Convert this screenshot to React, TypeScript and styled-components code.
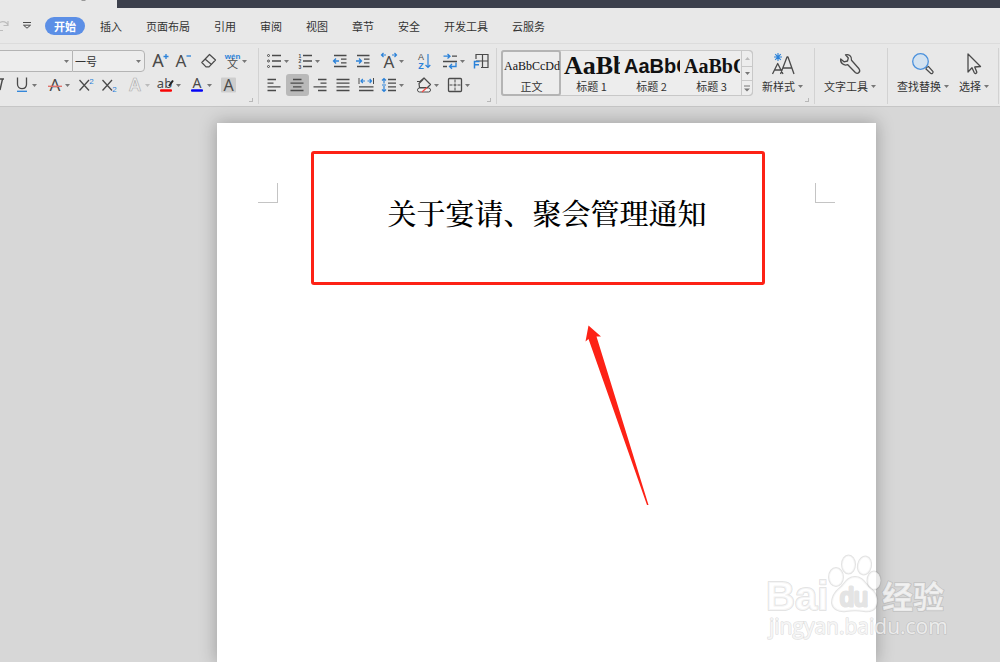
import React from "react";
import styled, { createGlobalStyle, css } from "styled-components";

const ink = "#4a4a4a";
const blue = "#2b82d9";
const uiFont = '"Noto Sans", "Noto Sans CJK SC", sans-serif';
const smallFont = '"Liberation Sans", "Noto Sans CJK SC", sans-serif';

const GlobalStyle = createGlobalStyle`
  *, *::before, *::after { box-sizing: border-box; }
  body {
    margin: 0;
    font: 11px/16px "Noto Sans CJK SC", "Noto Sans", sans-serif;
    color: #333;
    background: #d7d7d7;
    overflow: hidden;
  }
  button, select { font: inherit; color: inherit; background: none; border: 0; padding: 0; margin: 0; }
`;

const Shell = styled.div`
  display: flex;
  flex-direction: column;
  min-height: 100vh;
`;

const TitleBar = styled.div`
  display: flex;
  height: 8px;
  background: #3c404c;
`;

const WindowTab = styled.div`
  width: 117px;
  padding-left: 80px;
  background: #e8e8e8;

  svg { display: block; }
`;

const MenuBar = styled.nav`
  display: flex;
  align-items: center;
  height: 35px;
  background: #e8e8e8;
`;

const QuickTool = styled.button<{ $w: number }>`
  display: flex;
  align-items: center;
  width: ${(p) => p.$w}px;
  height: 18px;
`;

const MenuItem = styled.button<{ $active?: boolean }>`
  height: 18px;
  margin-right: 24px;
  white-space: nowrap;
  ${(p) =>
    p.$active &&
    css`
      padding: 0 9px;
      margin-right: 15px;
      border-radius: 9px;
      background: #5c8fe6;
      color: #fff;
      font-weight: 700;
    `}
`;

const Ribbon = styled.div`
  display: flex;
  padding: 4px 0 2px;
  background: #e8e8e8;
  border-top: 1px solid #dcdcdc;
  border-bottom: 1px solid #c6c6c6;
`;

const Group = styled.section<{ $left?: number; $right?: number; $gap?: number }>`
  position: relative;
  display: flex;
  gap: ${(p) => p.$gap ?? 0}px;
  height: 56px;
  flex-shrink: 0;
  padding: 1px ${(p) => p.$right ?? 0}px 0 ${(p) => p.$left ?? 0}px;
  border-right: 1px solid #d2d2d2;
`;

const Launcher = styled.button`
  position: absolute;
  right: 5px;
  bottom: 2px;
  width: 4px;
  height: 4px;
  border-right: 1px solid #b8b8b8;
  border-bottom: 1px solid #b8b8b8;
`;

const ToolRows = styled.div`
  display: flex;
  flex-direction: column;
`;

const ToolRow = styled.div`
  display: flex;
  align-items: center;
  height: 24px;
`;

const ToolButton = styled.button<{ $w: number; $active?: boolean }>`
  display: flex;
  align-items: center;
  gap: 1px;
  width: ${(p) => p.$w}px;
  height: 22px;
  padding-left: 2px;
  border-radius: 3px;
  background: ${(p) => (p.$active ? "#b9b9b9" : "transparent")};

  svg { display: block; flex-shrink: 0; overflow: visible; }
`;

const ItalicButton = styled.button`
  width: 11px;
  height: 22px;
  overflow: hidden;

  svg { display: block; }
`;

const Combo = styled.div<{ $w: number; $last?: boolean }>`
  display: flex;
  align-items: center;
  width: ${(p) => p.$w}px;
  height: 22px;
  padding-right: 3px;
  background: #ededed;
  border: 1px solid #b4b4b4;
  border-left-width: ${(p) => (p.$last ? 1 : 0)}px;
  border-right-width: ${(p) => (p.$last ? 1 : 0)}px;
  border-radius: ${(p) => (p.$last ? "0 4px 4px 0" : "0")};
  margin-right: ${(p) => (p.$last ? 4 : 0)}px;

  select {
    flex: 1;
    min-width: 0;
    padding-left: 2px;
    appearance: none;
    outline: 0;
  }
`;

const Gallery = styled.div`
  display: flex;
  height: 46px;
  margin-top: 1px;
  border-radius: 4px;
  background: #ededed;
  box-shadow: inset 0 0 0 1px #c8c8c8;
`;

const StyleItem = styled.button<{ $selected?: boolean }>`
  display: flex;
  flex-direction: column;
  width: 60px;
  padding: 2px 1px 0 2px;
  border-radius: 3px;
  text-align: center;
  box-shadow: ${(p) => (p.$selected ? "inset 0 0 0 2px #b4b4b4" : "none")};
`;

const Preview = styled.span<{ $size: number; $sans?: boolean; $bold?: boolean }>`
  width: 100%;
  height: 26px;
  padding-left: 1px;
  overflow: hidden;
  white-space: nowrap;
  text-align: left;
  color: #111;
  font-family: ${(p) => (p.$sans ? '"Liberation Sans", sans-serif' : '"Liberation Serif", serif')};
  font-size: ${(p) => p.$size}px;
  line-height: 28px;
  font-weight: ${(p) => (p.$bold ? 700 : 400)};
`;

const StyleName = styled.span`
  width: 100%;
  line-height: 16px;
`;

const GalleryScroll = styled.div`
  display: grid;
  grid-template-rows: 1fr 1fr 1fr;
  width: 12px;
  border: 1px solid #c8c8c8;
  border-radius: 0 4px 4px 0;

  button { display: grid; place-items: center; }
  button + button { border-top: 1px solid #c8c8c8; }
`;

const BigButton = styled.button`
  display: flex;
  flex-direction: column;
  align-items: center;
  height: 48px;
  padding-top: 3px;

  > svg { display: block; height: 24px; margin-bottom: 2px; overflow: visible; }
`;

const BigLabel = styled.span`
  display: flex;
  align-items: center;
  gap: 3px;
  white-space: nowrap;
`;

const Workspace = styled.main`
  position: relative;
  display: flex;
  flex: 1;
  padding: 16px 124px 0 217px;
  background: #d7d7d7;
`;

const Paper = styled.article`
  position: relative;
  flex: 1;
  padding: 28px 41px 0;
  background: #fff;
  box-shadow: 0 0 16px 1px rgba(0, 0, 0, 0.26);
`;

const FirstLine = styled.div`
  display: flex;
  align-items: flex-start;
`;

const CropMark = styled.div<{ $side: "left" | "right" }>`
  width: 20px;
  height: 20px;
  margin-top: 32px;
  border-bottom: 1px solid #c4c4c4;
  ${(p) => (p.$side === "left" ? "border-right" : "border-left")}: 1px solid #c4c4c4;
`;

const Callout = styled.div`
  flex: 1;
  height: 134px;
  margin: 0 50px 0 33px;
  padding: 38px 0 0 18px;
  border: 3px solid #fd2216;
  border-radius: 3px;
`;

const DocTitle = styled.h1`
  margin: 0;
  color: #000;
  font-family: "Noto Serif CJK SC", "Noto Sans CJK SC", serif;
  font-size: 29px;
  line-height: 42px;
  font-weight: 500;
  text-align: center;
  white-space: nowrap;
`;

const Arrow = styled.svg`
  position: absolute;
  left: 367px;
  top: 201px;
`;

const Watermark = styled.svg`
  position: absolute;
  right: 50px;
  bottom: 20px;
`;

const Caret = ({ color = "#777", up = false }: { color?: string; up?: boolean }) => (
  <svg width="5" height="5" viewBox="0 0 5 5">
    <path d={up ? "M0 4H5L2.5 1Z" : "M0 1H5L2.5 4Z"} fill={color} />
  </svg>
);

const BarCaret = () => (
  <svg width="6" height="7" viewBox="0 0 6 7">
    <path d="M0 1H6" stroke="#777" />
    <path d="M0 3.5H6L3 6.5Z" fill="#777" />
  </svg>
);

const Lines = ({ rows }: { rows: number[][] }) => (
  <path d={rows.map(([y, a, b]) => `M${a} ${y}H${b}`).join("")} stroke={ink} strokeWidth="1.3" />
);

const Letter = ({ x = 9, y = 15, size = 17, color = ink, children, bold }: {
  x?: number; y?: number; size?: number; color?: string; children: string; bold?: boolean;
}) => (
  <text
    x={x}
    y={y}
    fontSize={size}
    fill={color}
    textAnchor="middle"
    fontFamily={size < 12 ? smallFont : uiFont}
    fontWeight={bold ? 700 : 400}
  >
    {children}
  </text>
);

const icons: Record<string, React.ReactNode> = {
  grow: (
    <>
      <Letter x={7} size={18}>A</Letter>
      <path d="M12.5 4.5H17.5M15 2V7" stroke={blue} strokeWidth="1.3" />
    </>
  ),
  shrink: (
    <>
      <Letter x={7}>A</Letter>
      <path d="M12.5 4H17" stroke={blue} strokeWidth="1.3" />
    </>
  ),
  eraser: (
    <g fill="none" stroke={ink} strokeWidth="1.2" strokeLinejoin="round">
      <path d="M9.5 2.5L15.5 8L9 14.8H6L1.8 10.5Z" />
      <path d="M5 7L11.5 12.5" />
    </g>
  ),
  phonetic: (
    <>
      <Letter x={9.5} y={7} size={8} color={blue} bold>wén</Letter>
      <Letter x={9.5} y={16} size={11}>文</Letter>
    </>
  ),
  underline: (
    <>
      <path d="M4.5 1.5V8.2C4.5 14 13.5 14 13.5 8.2V1.5" fill="none" stroke={ink} strokeWidth="1.3" />
      <path d="M4 15.3H14" stroke={blue} strokeWidth="1.3" />
    </>
  ),
  strike: (
    <>
      <Letter>A</Letter>
      <path d="M2 10.3H16" stroke="#e0736d" strokeWidth="1.4" />
    </>
  ),
  sup: (
    <>
      <path d="M2.5 4L12 14.5M12 4L2.5 14.5" stroke={ink} strokeWidth="1.3" />
      <Letter x={14.5} y={7.5} size={8} color={blue}>2</Letter>
    </>
  ),
  sub: (
    <>
      <path d="M2.5 4L12 14.5M12 4L2.5 14.5" stroke={ink} strokeWidth="1.3" />
      <Letter x={14.5} y={16} size={8} color={blue}>2</Letter>
    </>
  ),
  effect: (
    <text x="9" y="15" fontSize="17" fontWeight="600" textAnchor="middle" fontFamily={uiFont} fill="#ececec" stroke="#b0b0b0" strokeWidth="0.7">
      A
    </text>
  ),
  highlight: (
    <>
      <Letter x={7.5} y={11.5} size={13}>ab</Letter>
      <path d="M16 4.5L12 10" stroke="#222" strokeWidth="2" />
      <rect x="3" y="13.2" width="12" height="2.6" rx="1" fill="#f80505" />
    </>
  ),
  color: (
    <>
      <Letter y={11.5} size={14}>A</Letter>
      <rect x="3" y="13.2" width="12" height="2.6" rx="1" fill="#0505f5" />
    </>
  ),
  shade: (
    <>
      <rect x="2" y="1.5" width="15" height="15" rx="1" fill="#cdcdcd" />
      <Letter x={9.5} y={14.5} size={16}>A</Letter>
    </>
  ),
  bullets: (
    <>
      <Lines rows={[[3.5, 7, 16], [9, 7, 16], [14.5, 7, 16]]} />
      <g fill="none" stroke={ink}>
        <circle cx="3.5" cy="3.5" r="1" />
        <circle cx="3.5" cy="9" r="1" />
        <circle cx="3.5" cy="14.5" r="1" />
      </g>
    </>
  ),
  numbers: (
    <>
      <Lines rows={[[3.5, 7, 16], [9, 7, 16], [14.5, 7, 16]]} />
      <Letter x={4} y={5.5} size={5} bold>1</Letter>
      <Letter x={4} y={11} size={5} bold>2</Letter>
      <Letter x={4} y={16.5} size={5} bold>3</Letter>
    </>
  ),
  outdent: (
    <>
      <Lines rows={[[3.5, 3, 15.5], [7.2, 10, 15.5], [10.8, 10, 15.5], [14.5, 3, 15.5]]} />
      <path d="M8 9H2.5M5 6.5L2.5 9L5 11.5" fill="none" stroke={blue} strokeWidth="1.3" />
    </>
  ),
  indent: (
    <>
      <Lines rows={[[3.5, 3, 15.5], [7.2, 10, 15.5], [10.8, 10, 15.5], [14.5, 3, 15.5]]} />
      <path d="M2 9H7.5M5 6.5L7.5 9L5 11.5" fill="none" stroke={blue} strokeWidth="1.3" />
    </>
  ),
  scale: (
    <>
      <Letter y={16}>A</Letter>
      <path d="M6 3H1.5M3.5 1L1.5 3L3.5 5M12 3H16.5M14.5 1L16.5 3L14.5 5" fill="none" stroke={blue} strokeWidth="1.2" />
    </>
  ),
  sort: (
    <>
      <Letter x={6} y={8} size={9}>A</Letter>
      <Letter x={6} y={17} size={9} color={blue} bold>Z</Letter>
      <path d="M13 2V15.5M10.5 13L13 15.5L15.3 13" fill="none" stroke={blue} strokeWidth="1.2" />
    </>
  ),
  marks: (
    <>
      <Lines rows={[[4.2, 11, 16], [9.5, 2, 16], [14.5, 2, 6]]} />
      <path d="M2.5 4.2H9M6.5 2L9 4.2L6.5 6.5M15 10.5V14.5H8.5M11 12L8.5 14.5L11 16.8" fill="none" stroke={blue} strokeWidth="1.3" />
    </>
  ),
  frame: (
    <>
      <path d="M4 7V2.5H16V15.5H9M10.5 2.5V15.5M4 9H16" fill="none" stroke={ink} strokeWidth="1.2" />
      <path d="M2.5 16.5V9.5H7.5M2.5 12.8H7" fill="none" stroke={blue} strokeWidth="1.5" />
    </>
  ),
  left: <Lines rows={[[3.5, 2.5, 11], [7.2, 2.5, 8.5], [10.8, 2.5, 15.5], [14.5, 2.5, 11]]} />,
  center: <Lines rows={[[3.5, 5, 13.5], [7.2, 2.5, 15.5], [10.8, 5, 13.5], [14.5, 2.5, 15.5]]} />,
  right: <Lines rows={[[3.5, 7, 15.5], [7.2, 9.5, 15.5], [10.8, 2.5, 15.5], [14.5, 7, 15.5]]} />,
  justify: <Lines rows={[[3.5, 2.5, 15.5], [7.2, 2.5, 15.5], [10.8, 2.5, 15.5], [14.5, 2.5, 15.5]]} />,
  distribute: (
    <>
      <Lines rows={[[10.8, 2, 16.5], [14.5, 2, 16.5]]} />
      <path d="M2 2V8M16.5 2V8" stroke={ink} />
      <path d="M4 5H8M5.8 3L4 5L5.8 7M10.5 5H14.5M12.7 3L14.5 5L12.7 7" fill="none" stroke={blue} strokeWidth="1.2" />
    </>
  ),
  spacing: (
    <>
      <Lines rows={[[3.5, 8, 16], [7.2, 8, 16], [10.8, 8, 16], [14.5, 8, 16]]} />
      <path d="M4 2.5V7.5M4 10V15.5M2 4.5L4 2.5L6 4.5M2 13.5L4 15.5L6 13.5M2 9H6" fill="none" stroke={blue} strokeWidth="1.2" />
    </>
  ),
  fill: (
    <>
      <path d="M2 5.5H5L9 2L15.5 8.5L12.5 11.5H4.5L4 7.5L8.5 3" fill="none" stroke={ink} strokeWidth="1.2" strokeLinejoin="round" />
      <rect x="2.5" y="12" width="13" height="4" rx="2" fill="#f4f4f4" stroke={ink} />
      <path d="M7 16L12 11.5" stroke="#f04a45" strokeWidth="1.2" />
    </>
  ),
  borders: (
    <>
      <rect x="2.5" y="2.5" width="13" height="13" rx="1" fill="none" stroke={ink} strokeWidth="1.3" />
      <path d="M9 3.5V14.5M3.5 9H14.5" stroke={ink} strokeDasharray="3 1" />
    </>
  ),
};

type ToolSpec = { icon: string; label: string; w?: number; caret?: boolean; active?: boolean; faint?: boolean };

const Tool = ({ icon, label, w = 23, caret, active, faint }: ToolSpec) => (
  <ToolButton $w={w} $active={active} aria-label={label} aria-pressed={active}>
    <svg width="18" height="18" viewBox="0 0 18 18">{icons[icon]}</svg>
    {caret && <Caret color={faint ? "#bbb" : "#777"} />}
  </ToolButton>
);

const fontTop: ToolSpec[] = [
  { icon: "grow", label: "增大字号" },
  { icon: "shrink", label: "减小字号", w: 26 },
  { icon: "eraser", label: "清除格式" },
  { icon: "phonetic", label: "拼音指南", w: 31, caret: true },
];
const fontBottom: ToolSpec[] = [
  { icon: "underline", label: "下划线", w: 33, caret: true },
  { icon: "strike", label: "删除线", w: 31, caret: true },
  { icon: "sup", label: "上标" },
  { icon: "sub", label: "下标", w: 26 },
  { icon: "effect", label: "文字效果", w: 31, caret: true, faint: true },
  { icon: "highlight", label: "突出显示", w: 31, caret: true },
  { icon: "color", label: "字体颜色", w: 31, caret: true },
  { icon: "shade", label: "字符底纹" },
];
const paraTop: ToolSpec[] = [
  { icon: "bullets", label: "项目符号", w: 31, caret: true },
  { icon: "numbers", label: "编号", w: 35, caret: true },
  { icon: "outdent", label: "减少缩进量" },
  { icon: "indent", label: "增加缩进量", w: 26 },
  { icon: "scale", label: "字符缩放", w: 35, caret: true },
  { icon: "sort", label: "排序", w: 26 },
  { icon: "marks", label: "显示编辑标记", w: 31, caret: true },
  { icon: "frame", label: "制表位" },
];
const paraBottom: ToolSpec[] = [
  { icon: "left", label: "左对齐" },
  { icon: "center", label: "居中对齐", active: true },
  { icon: "right", label: "右对齐" },
  { icon: "justify", label: "两端对齐" },
  { icon: "distribute", label: "分散对齐" },
  { icon: "spacing", label: "行距", w: 35, caret: true },
  { icon: "fill", label: "底纹颜色", w: 31, caret: true },
  { icon: "borders", label: "边框", w: 31, caret: true },
];

const menus = ["开始", "插入", "页面布局", "引用", "审阅", "视图", "章节", "安全", "开发工具", "云服务"];

const NewStyleIcon = () => (
  <svg width="24" height="24" viewBox="0 0 24 24" fill="none">
    <path d="M1.5 22L6.7 11.5L12 22M3.5 18H10M9.5 22L16 5H17L23 22M12 16H21" stroke={ink} strokeWidth="1.3" strokeLinejoin="round" />
    <path d="M7 1V9M3 5H11M4.2 2.2L9.8 7.8M9.8 2.2L4.2 7.8" stroke={blue} strokeWidth="1.1" />
  </svg>
);

const WrenchIcon = () => (
  <svg width="24" height="24" viewBox="0 0 24 24" fill="none" stroke={ink} strokeWidth="1.3" strokeLinejoin="round">
    <path d="M7.5 2.8C10.5 1.8 14 4 13.5 8.3L21 16.8C23 19.5 20 22.8 17.3 20.5L9.8 12.7C5.5 14 2 11 2.7 7L6 9.8L9.5 9L10.3 6Z" />
  </svg>
);

const SearchIcon = () => (
  <svg width="24" height="24" viewBox="0 0 24 24" fill="none">
    <path d="M15.5 15.5L17.5 14.5L22 19.5C22.5 21 21 22 19.8 21.5L15 17Z" stroke={ink} strokeWidth="1.2" />
    <circle cx="9.5" cy="9.5" r="7.8" fill="#d3e2f0" stroke="#4a90dc" strokeWidth="1.3" />
  </svg>
);

const CursorIcon = () => (
  <svg width="24" height="24" viewBox="0 0 24 24" fill="none" stroke={ink} strokeWidth="1.3" strokeLinejoin="round">
    <path d="M6 2V20L10 15.8L12.3 20.8C13 22.2 15.3 21.2 14.7 19.8L12.7 15L18.5 14.5Z" />
  </svg>
);

const Big = ({ icon, label }: { icon: React.ReactNode; label: string }) => (
  <BigButton>
    {icon}
    <BigLabel>
      {label}
      <Caret />
    </BigLabel>
  </BigButton>
);

const BaiduWatermark = () => (
  <Watermark width="188" height="96" viewBox="762 546 188 96" role="img" aria-label="Baidu 经验">
    <g fill="#fff" fillOpacity="0.68" stroke="#888" strokeOpacity="0.24" strokeWidth="2" strokeLinejoin="round" paintOrder="stroke">
      <text x="766" y="610" fontSize="40" fontWeight="700" fontFamily='"Liberation Sans", sans-serif'>Bai</text>
      <ellipse cx="836" cy="577" rx="7" ry="9" />
      <ellipse cx="848.5" cy="564.5" rx="6.5" ry="9" />
      <ellipse cx="864.5" cy="565.5" rx="6.5" ry="9" transform="rotate(12 864.5 565.5)" />
      <ellipse cx="874" cy="580.5" rx="6.5" ry="9" />
      <path d="M855 577C863 577 865 584 870 588C875 592 878 597 877 603C876 610 870 612 864 611C858 610 852 610 846 611C839 612 833 609 832 603C832 597 835 592 840 588C845 584 847 577 855 577Z" />
      <text x="840" y="606" fontSize="25" fontWeight="400" fontFamily='"Liberation Sans", sans-serif' fill="#e4e4e4" strokeWidth="3">du</text>
      <text x="882" y="608" fontSize="31" fontWeight="700" fontFamily='"Noto Sans CJK SC", sans-serif'>经验</text>
      <text x="769" y="634" fontSize="21" fontFamily='"Open Sans", sans-serif' strokeWidth="1.6">jingyan.baidu.com</text>
    </g>
  </Watermark>
);

export default function App() {
  return (
    <Shell>
      <GlobalStyle />
      <TitleBar>
        <WindowTab>
          <svg width="7" height="2" viewBox="0 0 7 2"><path d="M1 0H6L5 1H2Z" fill="#999" /></svg>
        </WindowTab>
      </TitleBar>
      <MenuBar aria-label="功能区">
        <QuickTool $w={22} aria-label="恢复">
          <svg width="9" height="12" viewBox="0 0 9 12" fill="none" stroke="#bdbdbd" strokeWidth="1.2">
            <path d="M0 2.5C3 0.5 6.5 2 8 5M8 1V5.5H3.5M0 10.5H3" />
          </svg>
        </QuickTool>
        <QuickTool $w={23} aria-label="自定义快速访问">
          <svg width="9" height="9" viewBox="0 0 9 9" fill="none" stroke={ink}>
            <path d="M1 1.5H9M1.5 4.2L5 7.2L8.5 4.2Z" />
          </svg>
        </QuickTool>
        {menus.map((m, i) => (
          <MenuItem key={m} $active={i === 0}>{m}</MenuItem>
        ))}
      </MenuBar>
      <Ribbon>
        <Group $right={6}>
          <ToolRows>
            <ToolRow>
              <Combo $w={72}>
                <select aria-label="字体"><option></option></select>
                <Caret />
              </Combo>
              <Combo $w={73} $last>
                <select aria-label="字号"><option>一号</option></select>
                <Caret />
              </Combo>
              {fontTop.map((t) => <Tool key={t.icon} {...t} />)}
            </ToolRow>
            <ToolRow>
              <ItalicButton aria-label="倾斜">
                <svg width="5" height="22" viewBox="0 0 5 22"><path d="M0 5H4M2.5 5L0 16" stroke={ink} strokeWidth="1.4" /></svg>
              </ItalicButton>
              {fontBottom.map((t) => <Tool key={t.icon} {...t} />)}
            </ToolRow>
          </ToolRows>
          <Launcher aria-label="字体设置" />
        </Group>
        <Group $left={4} $right={3}>
          <ToolRows>
            <ToolRow>{paraTop.map((t) => <Tool key={t.icon} {...t} />)}</ToolRow>
            <ToolRow>{paraBottom.map((t) => <Tool key={t.icon} {...t} />)}</ToolRow>
          </ToolRows>
          <Launcher aria-label="段落设置" />
        </Group>
        <Group $left={4} $right={11} $gap={9}>
          <Gallery>
            <StyleItem $selected>
              <Preview $size={12}>AaBbCcDd</Preview>
              <StyleName>正文</StyleName>
            </StyleItem>
            <StyleItem>
              <Preview $size={26} $bold>AaBb</Preview>
              <StyleName>标题 1</StyleName>
            </StyleItem>
            <StyleItem>
              <Preview $size={20} $sans $bold>AaBbC</Preview>
              <StyleName>标题 2</StyleName>
            </StyleItem>
            <StyleItem>
              <Preview $size={20} $bold>AaBbC</Preview>
              <StyleName>标题 3</StyleName>
            </StyleItem>
            <GalleryScroll>
              <button aria-label="上一行"><Caret up color="#bbb" /></button>
              <button aria-label="下一行"><Caret /></button>
              <button aria-label="更多样式"><BarCaret /></button>
            </GalleryScroll>
          </Gallery>
          <Big icon={<NewStyleIcon />} label="新样式" />
          <Launcher aria-label="样式设置" />
        </Group>
        <Group $left={9} $right={11}>
          <Big icon={<WrenchIcon />} label="文字工具" />
        </Group>
        <Group $left={9} $right={9} $gap={10}>
          <Big icon={<SearchIcon />} label="查找替换" />
          <Big icon={<CursorIcon />} label="选择" />
        </Group>
      </Ribbon>
      <Workspace>
        <Paper>
          <FirstLine>
            <CropMark $side="left" />
            <Callout>
              <DocTitle>关于宴请、聚会管理通知</DocTitle>
            </Callout>
            <CropMark $side="right" />
          </FirstLine>
          <Arrow width="68" height="184" viewBox="584 324 68 184" aria-hidden="true">
            <path d="M588.5 325.5L601 336.5L596.5 336.5L648.5 505H647L588.5 339L585.5 341.5Z" fill="#fd2216" />
          </Arrow>
        </Paper>
        <BaiduWatermark />
      </Workspace>
    </Shell>
  );
}
